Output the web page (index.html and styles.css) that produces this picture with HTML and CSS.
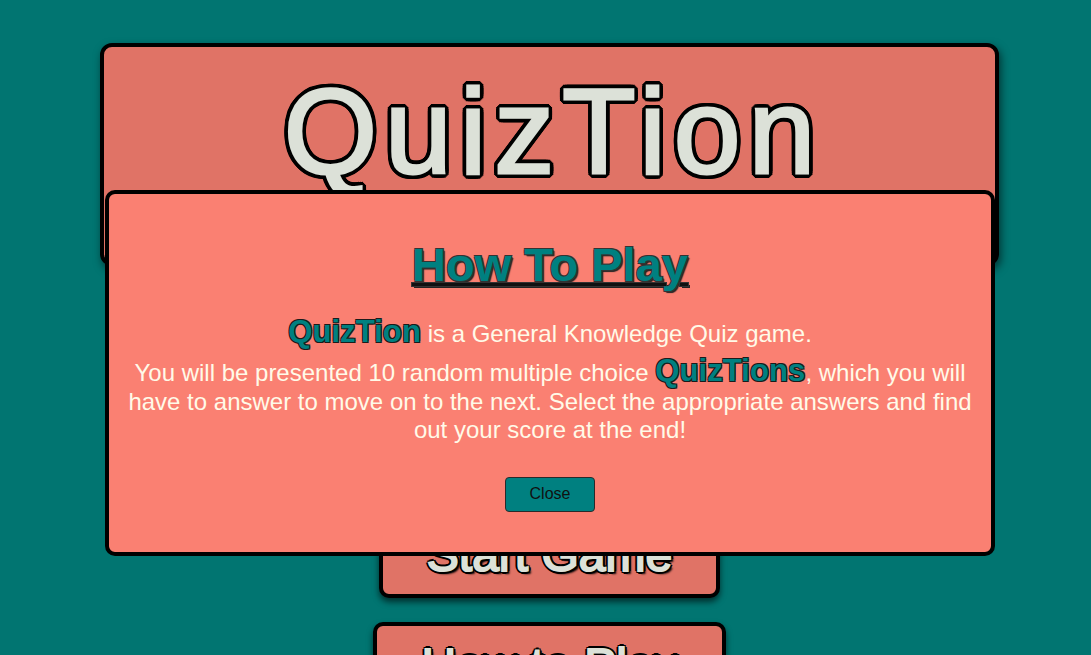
FILE: index.html
```html
<!DOCTYPE html>
<html lang="en">
<head>
<meta charset="utf-8">
<title>QuizTion</title>
<link rel="stylesheet" href="styles.css">
</head>
<body>
<main class="page">
  <header class="banner">
    <h1 class="banner-title">QuizTion</h1>
  </header>
  <nav class="menu">
    <button class="menu-btn">Start Game</button>
    <button class="menu-btn">How to Play</button>
  </nav>
</main>

<div class="modal">
  <h2 class="modal-title">How To Play</h2>
  <p class="modal-text"><span class="brand">QuizTion</span> is a General Knowledge Quiz game.</p>
  <p class="modal-text modal-text-second">You will be presented 10 random multiple choice <span class="brand">QuizTions</span>, which you will have to answer to move on to the next. Select the appropriate answers and find out your score at the end!</p>
  <button class="close-btn">Close</button>
</div>
</body>
</html>
```

FILE: styles.css
```css
html, body {
  margin: 0;
  padding: 0;
}

body {
  background: #017571;
  font-family: "Liberation Sans", Arial, sans-serif;
  height: 655px;
  overflow: hidden;
}

.page {
  padding: 43px 92px 0 100px;
  display: flex;
  flex-direction: column;
}

.banner {
  background: #e07366;
  border: 4px solid #000;
  border-radius: 12px;
  padding: 18px 0 0;
  height: 223px;
  box-sizing: border-box;
  box-shadow: 2px 4px 8px rgba(0, 0, 0, 0.55);
  text-align: center;
}

.banner-title {
  margin: 0;
  font-size: 120px;
  font-weight: normal;
  line-height: 1.1;
  letter-spacing: 8px;
  text-indent: 8px;
  color: #dce1d8;
  -webkit-text-stroke: 3px #dce1d8;
  text-shadow:
    5px 0 0 #000, -5px 0 0 #000, 0 5px 0 #000, 0 -5px 0 #000,
    4px 3px 0 #000, -4px 3px 0 #000, 4px -3px 0 #000, -4px -3px 0 #000,
    3px 4px 0 #000, -3px 4px 0 #000, 3px -4px 0 #000, -3px -4px 0 #000,
    5px 2px 0 #000, -5px 2px 0 #000, 5px -2px 0 #000, -5px -2px 0 #000,
    2px 5px 0 #000, -2px 5px 0 #000, 2px -5px 0 #000, -2px -5px 0 #000,
    0 0 2px #000;
}

.menu {
  margin-top: 245px;
  display: flex;
  flex-direction: column;
  align-items: center;
  gap: 24px;
}

.menu-btn {
  font-family: "Liberation Sans", Arial, sans-serif;
  font-size: 48px;
  line-height: normal;
  color: #dce1d8;
  background: #e07366;
  border: 4px solid #000;
  border-radius: 10px;
  padding: 12px 44px;
  box-shadow: 0 4px 6px rgba(0, 0, 0, 0.6);
  -webkit-text-stroke: 2px #dce1d8;
  text-shadow:
    3px 0 0 #000, -3px 0 0 #000, 0 3px 0 #000, 0 -3px 0 #000,
    2px 2px 0 #000, -2px 2px 0 #000, 2px -2px 0 #000, -2px -2px 0 #000,
    3px 3px 2px #000;
}

.modal {
  position: fixed;
  left: 105px;
  top: 190px;
  width: 890px;
  height: 366px;
  box-sizing: border-box;
  background: #fa8072;
  border: 4px solid #000;
  border-radius: 10px;
  padding: 43px 16px 0;
  display: flex;
  flex-direction: column;
  align-items: center;
  text-align: center;
}

.modal-title {
  margin: 0;
  font-size: 47px;
  font-weight: bold;
  line-height: normal;
  color: #008080;
  text-decoration: underline;
  text-decoration-color: #111;
  text-decoration-thickness: 3px;
  text-shadow:
    1px 1px 0 #333, -1px 1px 0 #333, 1px -1px 0 #333, -1px -1px 0 #333, 2px 2px 1px #222;
}

.modal-text {
  margin: 24px 0 0;
  font-size: 24px;
  line-height: 1.2;
  color: #fffae8;
}

.modal-text-second {
  margin-top: 6px;
}

.brand {
  font-size: 1.3em;
  font-weight: bold;
  line-height: 1;
  color: #008080;
  text-shadow:
    1px 1px 0 #1b1b1b, -1px 1px 0 #1b1b1b, 1px -1px 0 #1b1b1b, -1px -1px 0 #1b1b1b;
}

.close-btn {
  margin-top: 32px;
  font-family: "Liberation Sans", Arial, sans-serif;
  font-size: 16px;
  line-height: normal;
  color: #111;
  background: #008080;
  border: 1px solid #2a2a2a;
  border-radius: 4px;
  padding: 7px 24px 8px;
}
```
